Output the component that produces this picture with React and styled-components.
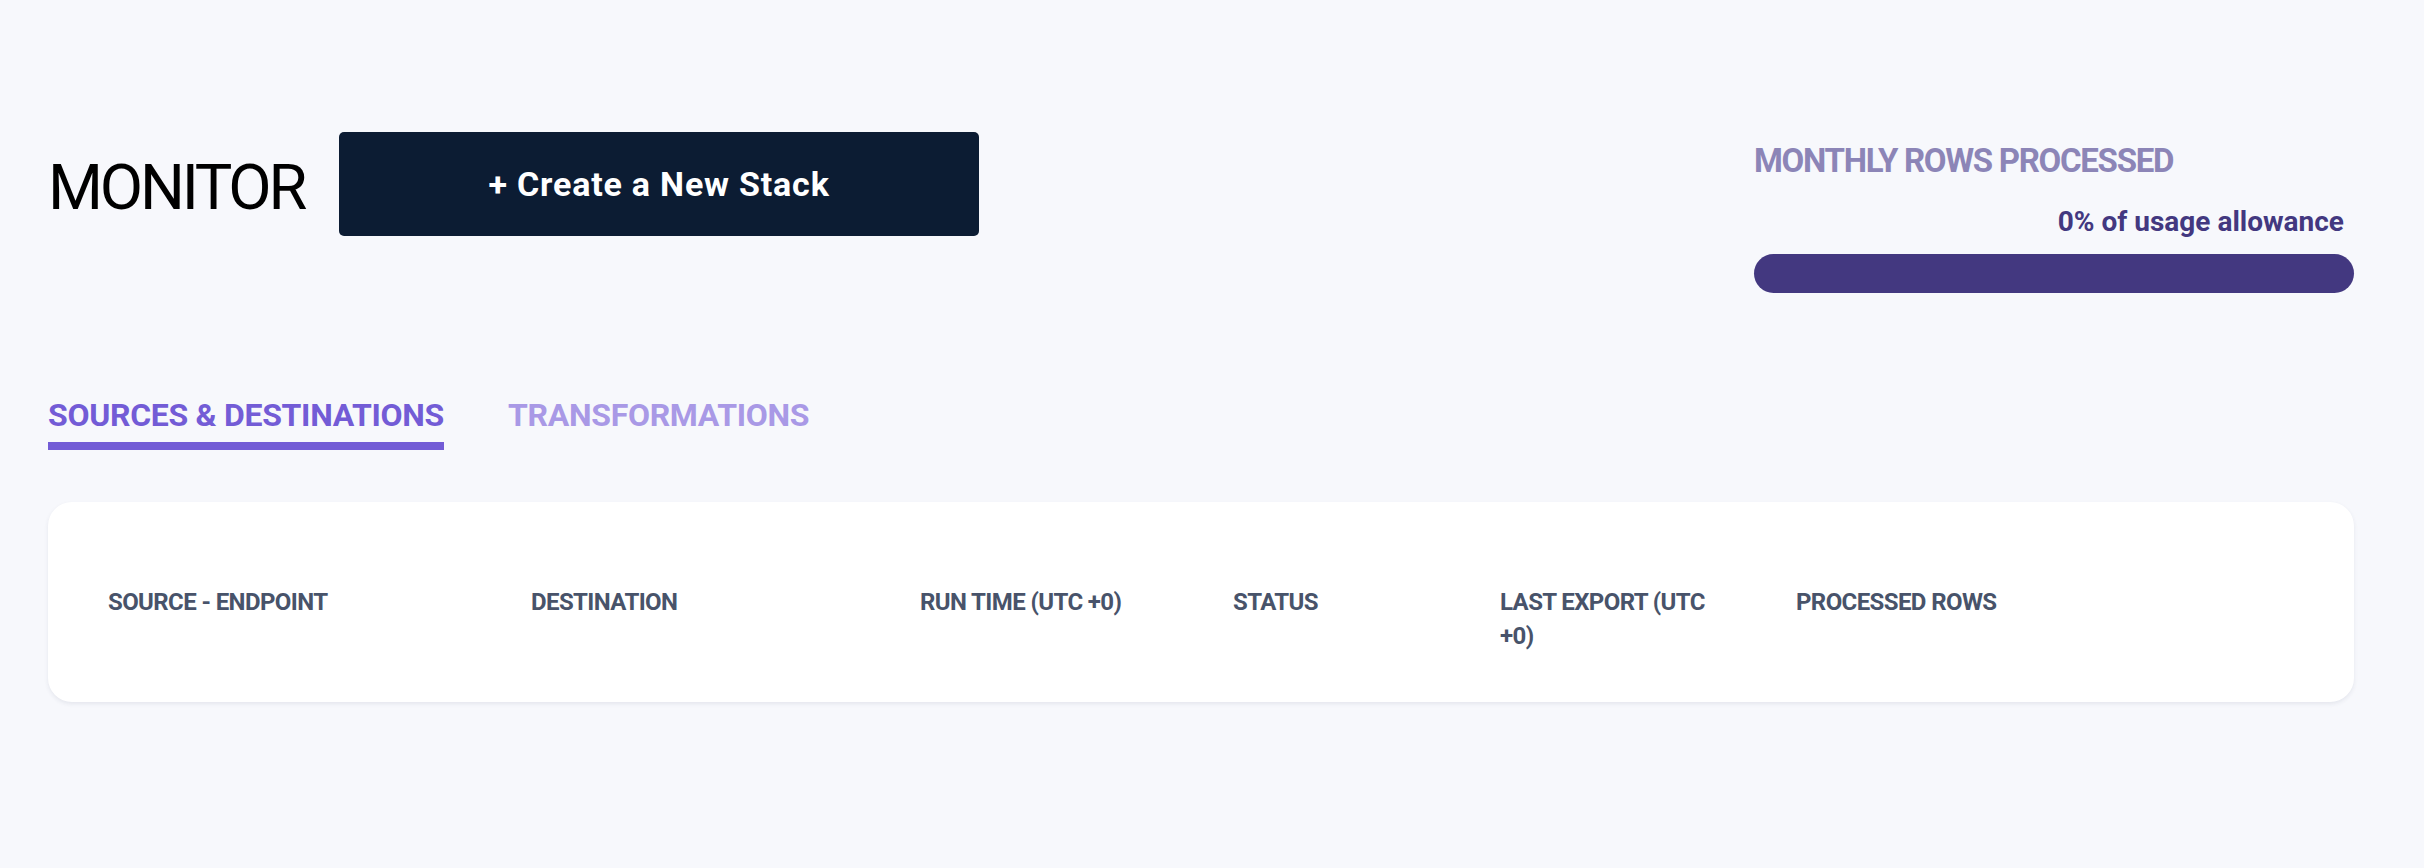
import React, { useState } from "react";
import styled, { createGlobalStyle } from "styled-components";

const GlobalStyle = createGlobalStyle`
  html, body {
    margin: 0;
    padding: 0;
    background: #f7f8fc;
  }
  body {
    font-family: "Roboto", "Liberation Sans", sans-serif;
    -webkit-font-smoothing: antialiased;
  }
  * { box-sizing: border-box; }
`;

const Page = styled.main`
  min-height: 868px;
  padding: 132px 70px 0 48px;
  background: #f7f8fc;
`;

const TopBar = styled.header`
  display: flex;
  justify-content: space-between;
  align-items: flex-start;
`;

const TitleGroup = styled.div`
  display: flex;
  align-items: center;
  gap: 35px;
`;

const Title = styled.h1`
  margin: 6px 0 0 0;
  font-size: 63px;
  line-height: 1;
  font-weight: 400;
  letter-spacing: -3.2px;
  color: #000;
`;

const CreateButton = styled.button`
  width: 640px;
  height: 104px;
  padding: 0;
  border: none;
  border-radius: 5px;
  background: #0c1c33;
  color: #fff;
  font-family: inherit;
  font-size: 34px;
  font-weight: 700;
  letter-spacing: 0.8px;
  cursor: pointer;
  display: flex;
  align-items: center;
  justify-content: center;
`;

const Usage = styled.section`
  width: 600px;
  margin-top: 9px;
  display: flex;
  flex-direction: column;
`;

const UsageLabel = styled.h2`
  margin: 0;
  font-size: 33px;
  line-height: 40px;
  font-weight: 700;
  letter-spacing: -1.3px;
  color: #8c85b7;
`;

const UsageText = styled.div`
  margin-top: 24px;
  padding-right: 10px;
  text-align: right;
  font-size: 28px;
  line-height: 34px;
  font-weight: 700;
  color: #433880;
`;

const Track = styled.div`
  margin-top: 15px;
  height: 39px;
  border-radius: 20px;
  background: #433880;
  overflow: hidden;
`;

const Fill = styled.div`
  height: 100%;
  background: #6a5bc2;
`;

const Tabs = styled.nav`
  margin-top: 102px;
  display: flex;
  gap: 64px;
`;

const Tab = styled.button`
  padding: 0 0 7px 0;
  margin: 0;
  background: none;
  border: none;
  border-bottom: 8px solid ${(p) => (p.$active ? "#735cd6" : "transparent")};
  font-family: inherit;
  font-size: 32px;
  line-height: 40px;
  font-weight: 700;
  letter-spacing: -0.3px;
  color: ${(p) => (p.$active ? "#735cd6" : "#a999e6")};
  cursor: pointer;
`;

const Card = styled.section`
  margin-top: 52px;
  padding: 83px 60px 49px 60px;
  background: #fff;
  border-radius: 24px;
  box-shadow: 0 2px 4px rgba(40, 50, 90, 0.09);
`;

const HeaderRow = styled.div`
  display: grid;
  grid-template-columns: 423px 389px 313px 267px 296px 1fr;
  align-items: start;
`;

const HeaderCell = styled.div`
  padding-right: 76px;
  font-size: 24px;
  line-height: 34px;
  font-weight: 700;
  letter-spacing: -0.6px;
  color: #48536a;
  text-transform: uppercase;
`;

const columns = [
  "SOURCE - ENDPOINT",
  "DESTINATION",
  "RUN TIME (UTC +0)",
  "STATUS",
  "LAST EXPORT (UTC +0)",
  "PROCESSED ROWS",
];

export default function App() {
  const [tab, setTab] = useState("sources");
  const usage = 0;
  return (
    <>
      <GlobalStyle />
      <Page>
        <TopBar>
          <TitleGroup>
            <Title>MONITOR</Title>
            <CreateButton>+ Create a New Stack</CreateButton>
          </TitleGroup>
          <Usage>
            <UsageLabel>MONTHLY ROWS PROCESSED</UsageLabel>
            <UsageText>{usage}% of usage allowance</UsageText>
            <Track>
              <Fill style={{ width: `${usage}%` }} />
            </Track>
          </Usage>
        </TopBar>
        <Tabs>
          <Tab $active={tab === "sources"} onClick={() => setTab("sources")}>
            SOURCES &amp; DESTINATIONS
          </Tab>
          <Tab $active={tab === "transformations"} onClick={() => setTab("transformations")}>
            TRANSFORMATIONS
          </Tab>
        </Tabs>
        <Card>
          <HeaderRow>
            {columns.map((c) => (
              <HeaderCell key={c}>{c}</HeaderCell>
            ))}
          </HeaderRow>
        </Card>
      </Page>
    </>
  );
}
